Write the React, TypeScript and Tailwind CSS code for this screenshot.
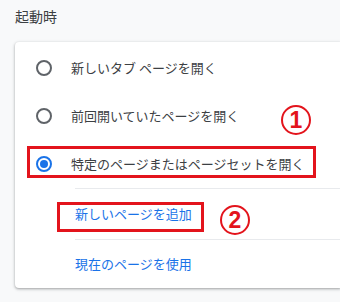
import React from "react";

const font = { fontFamily: '"Noto Sans CJK JP", "Noto Sans", sans-serif' };

function Radio({ checked }: { checked?: boolean }) {
  return checked ? (
    <span className="flex h-[16px] w-[16px] items-center justify-center rounded-full border-2 border-[#1a73e8]">
      <span className="h-[8px] w-[8px] rounded-full bg-[#1a73e8]" />
    </span>
  ) : (
    <span className="h-[16px] w-[16px] rounded-full border-2 border-[#5f6368]" />
  );
}

function Circled({ n }: { n: string }) {
  return (
    <span className="flex h-[30px] w-[30px] items-center justify-center rounded-full border-[2px] border-[#e3141c] text-[23px] font-bold leading-none text-[#e3141c]" style={{ fontFamily: '"Liberation Sans", Arial, sans-serif' }}>
      {n}
    </span>
  );
}

export default function App() {
  return (
    <div className="h-[302px] w-[340px] overflow-hidden bg-[#f8f9fa]" style={font}>
      <div className="pl-[15px] pt-[6px] text-[14px] leading-[20px] text-[#3c4043]">起動時</div>
      <div className="ml-[15px] mt-[16px] rounded-l-[4px] bg-white pt-[2px] shadow-[0_1px_2px_rgba(60,64,67,0.3),0_1px_3px_1px_rgba(60,64,67,0.15)]">
        <div className="flex h-[48px] items-center pl-[21px] text-[13px] text-[#3c4043]">
          <Radio />
          <span className="ml-[19px]">新しいタブ ページを開く</span>
        </div>
        <div className="relative flex h-[48px] items-center pl-[21px] text-[13px] text-[#3c4043]">
          <Radio />
          <span className="ml-[19px]">前回開いていたページを開く</span>
          <span className="absolute left-[266px] top-[13px]">
            <Circled n="1" />
          </span>
        </div>
        <div className="relative flex h-[48px] items-center pl-[21px] text-[13px] text-[#3c4043]">
          <Radio checked />
          <span className="ml-[19px]">特定のページまたはページセットを開く</span>
          <span className="absolute left-[12px] top-[6px] h-[32px] w-[289px] border-[3px] border-[#e3141c]" />
        </div>
        <div className="ml-[60px] border-t border-[#e8eaed]">
          <div className="relative flex h-[50px] items-center text-[13px] text-[#1a73e8]">
            <span>新しいページを追加</span>
            <span className="absolute left-[-18px] top-[13px] h-[30px] w-[147px] border-[3px] border-[#e3141c]" />
            <span className="absolute left-[145px] top-[16px]">
              <Circled n="2" />
            </span>
          </div>
          <div className="flex h-[49px] items-center border-t border-[#e8eaed] text-[13px] text-[#1a73e8]">
            <span>現在のページを使用</span>
          </div>
        </div>
      </div>
    </div>
  );
}
